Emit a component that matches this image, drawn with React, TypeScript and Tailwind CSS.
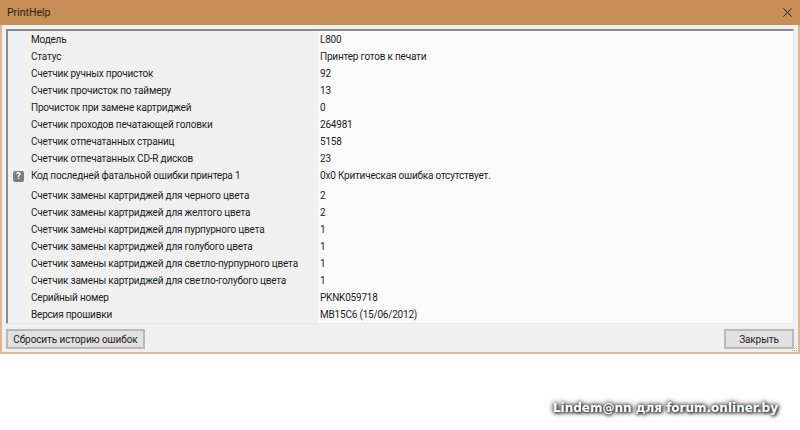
const rows: [string, string, boolean?][] = [
  ['Модель', 'L800'],
  ['Статус', 'Принтер готов к печати'],
  ['Счетчик ручных прочисток', '92'],
  ['Счетчик прочисток по таймеру', '13'],
  ['Прочисток при замене картриджей', '0'],
  ['Счетчик проходов печатающей головки', '264981'],
  ['Счетчик отпечатанных страниц', '5158'],
  ['Счетчик отпечатанных CD-R дисков', '23'],
  ['Код последней фатальной ошибки принтера 1', '0x0 Критическая ошибка отсутствует.', true],
  ['Счетчик замены картриджей для черного цвета', '2'],
  ['Счетчик замены картриджей для желтого цвета', '2'],
  ['Счетчик замены картриджей для пурпурного цвета', '1'],
  ['Счетчик замены картриджей для голубого цвета', '1'],
  ['Счетчик замены картриджей для светло-пурпурного цвета', '1'],
  ['Счетчик замены картриджей для светло-голубого цвета', '1'],
  ['Серийный номер', 'PKNK059718'],
  ['Версия прошивки', 'MB15C6 (15/06/2012)'],
];

export default function App() {
  return (
    <div className="w-[800px] h-[430px] bg-white overflow-hidden font-['Roboto',sans-serif] text-[10px] tracking-[-0.2px] text-[#1c1c1c]">
      <div className="relative h-[354px] flex flex-col bg-[#f0f0f0] border-x-2 border-b-2 border-[#dfb88f]">
        <div className="h-[25px] shrink-0 -mx-[2px] flex items-center justify-between bg-[#c68e55] pl-[7px] pr-[8px] text-[#2a2118] text-[10.5px] tracking-normal">
          <span>PrintHelp</span>
          <svg className="mb-[1px]" width="9" height="9" viewBox="0 0 9 9" stroke="#1a1a1a" strokeWidth="1" fill="none">
            <path d="M0.5 0.5 L8.5 8.5 M8.5 0.5 L0.5 8.5" />
          </svg>
        </div>
        <div className="flex-1 flex flex-col px-[4px] pt-[4px] pb-[3px]">
          <div className="flex-1 border-t-2 border-l-2 border-[#8a8a8a] border-r border-r-[#e8e8e8] border-b border-b-[#e8e8e8] bg-[linear-gradient(to_right,#f0f0f0_310px,#fafafa_310px)]">
            {rows.map(([label, value, icon]) => (
              <div key={label} className={icon ? 'flex h-[20px] pb-[3px]' : 'flex h-[17px]'}>
                <div className="w-[310px] flex items-center">
                  <div className="w-[23px] shrink-0 flex justify-center">
                    {icon && (
                      <div className="ml-[-2px] mt-[1px] w-[11px] h-[11px] rounded-[2px] bg-[#7d7d7d] text-white font-bold text-[9px] leading-[11px] text-center">?</div>
                    )}
                  </div>
                  <span className="whitespace-nowrap">{label}</span>
                </div>
                <div className="flex items-center pl-[2px] whitespace-nowrap">{value}</div>
              </div>
            ))}
          </div>
          <div className="flex justify-between mt-[5px]">
            <button className="w-[139px] h-[20px] bg-[#e1e1e1] border-2 border-[#b9b9b9] whitespace-nowrap tracking-[-0.1px]">Сбросить историю ошибок</button>
            <button className="w-[70px] h-[20px] bg-[#e1e1e1] border-2 border-[#b9b9b9] whitespace-nowrap tracking-[-0.1px]">Закрыть</button>
          </div>
        </div>
        <svg className="absolute right-0 bottom-0" width="6" height="6" viewBox="0 0 6 6" fill="#b5b5b5">
          <rect x="4" y="0" width="1" height="1" />
          <rect x="2" y="2" width="1" height="1" />
          <rect x="4" y="2" width="1" height="1" />
          <rect x="0" y="4" width="1" height="1" />
          <rect x="2" y="4" width="1" height="1" />
          <rect x="4" y="4" width="1" height="1" />
        </svg>
      </div>
      <div className="mt-[45px] mr-[22px] text-right font-['DejaVu_Sans',sans-serif] font-bold text-[12px] tracking-normal text-white [text-shadow:0_0_4px_#222,1px_1px_3px_#222,0_0_6px_#444]">
        Lindem@nn для forum.onliner.by
      </div>
    </div>
  );
}
